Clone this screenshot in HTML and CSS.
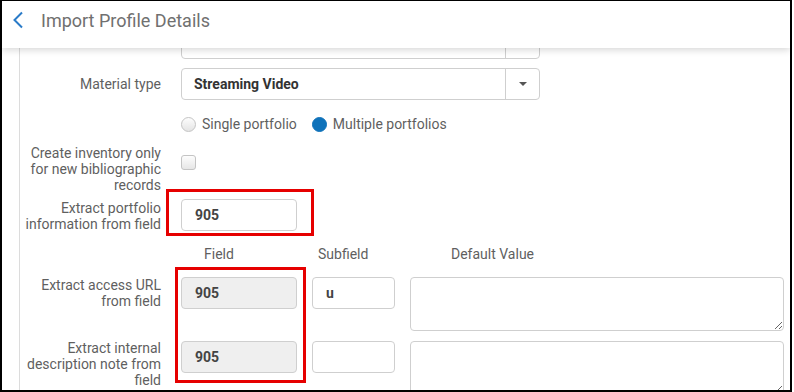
FILE: index.html
```html
<!DOCTYPE html>
<html lang="en">
<head>
    <meta charset="UTF-8">
    <meta name="viewport" content="width=device-width, initial-scale=1.0">
    <title>Import Profile Details</title>
    <link rel="stylesheet" href="styles.css">
</head>
<body>
    <div class="frame">
        <header class="page-header">
            <svg class="back-icon" width="12" height="18" viewBox="0 0 12 18">
                <path d="M10 1.5 L2.5 9 L10 16.5" fill="none" stroke="#2a7bc8" stroke-width="2"/>
            </svg>
            <span class="page-title">Import Profile Details</span>
        </header>

        <div class="content">
            <div class="panel">
                <div class="form-row row-partial">
                    <div class="label"></div>
                    <div class="select-box">
                        <span class="select-value"></span>
                        <span class="select-toggle"></span>
                    </div>
                </div>

                <div class="form-row row-material">
                    <div class="label">Material type</div>
                    <div class="select-box">
                        <span class="select-value">Streaming Video</span>
                        <span class="select-toggle"><span class="caret"></span></span>
                    </div>
                </div>

                <div class="form-row row-radios">
                    <div class="label"></div>
                    <label class="radio"><span class="radio-dot"></span>Single portfolio</label>
                    <label class="radio"><span class="radio-dot checked"></span>Multiple portfolios</label>
                </div>

                <div class="form-row row-checkbox">
                    <div class="label">Create inventory only for new bibliographic records</div>
                    <span class="checkbox"></span>
                </div>

                <div class="form-row row-portfolio">
                    <div class="label">Extract portfolio information from field</div>
                    <div class="highlight-wrap">
                        <div class="text-input field-input">905</div>
                        <span class="highlight highlight-single"></span>
                    </div>
                </div>

                <div class="field-grid">
                    <div class="label"></div>
                    <div class="col-head head-field">Field</div>
                    <div class="col-head head-subfield">Subfield</div>
                    <div class="col-head head-default">Default Value</div>

                    <div class="label">Extract access URL from field</div>
                    <div class="text-input field-input disabled">905</div>
                    <div class="text-input sub-input">u</div>
                    <textarea class="default-input"></textarea>

                    <div class="label last-row">Extract internal description note from field</div>
                    <div class="text-input field-input disabled last-row">905</div>
                    <div class="text-input sub-input last-row"></div>
                    <textarea class="default-input last-row"></textarea>

                    <span class="highlight highlight-column"></span>
                </div>
            </div>
        </div>
    </div>
</body>
</html>
```

FILE: styles.css
```css
body {
    margin: 0;
    padding: 0;
    font-family: Roboto, "Liberation Sans", Arial, sans-serif;
    background-color: white;
    color: #555;
}
.frame {
    width: 792px;
    height: 392px;
    box-sizing: border-box;
    border: 2px solid black;
    border-top-width: 1px;
    overflow: hidden;
    display: flex;
    flex-direction: column;
}
.page-header {
    position: relative;
    z-index: 2;
    height: 47px;
    flex-shrink: 0;
    box-sizing: border-box;
    padding: 10px 0 0 10px;
    display: flex;
    align-items: flex-start;
    background-color: white;
    box-shadow: 0 2px 7px rgba(0, 0, 0, 0.16);
}
.back-icon {
    display: block;
}
.page-title {
    margin-left: 17px;
    font-size: 18px;
    line-height: 21px;
    margin-top: -1px;
    color: #707070;
}
.content {
    flex: 1;
    overflow: hidden;
}
.panel {
    margin-left: 17px;
    border-left: 1px solid #dcdcdc;
    height: 100%;
    margin-top: -21px;
    padding-bottom: 40px;
}
.form-row {
    display: flex;
    align-items: flex-start;
}
.label {
    width: 141px;
    margin-right: 20px;
    flex-shrink: 0;
    text-align: right;
    font-size: 14px;
    line-height: 16px;
    color: #5f5f5f;
}
.row-partial {
    margin-bottom: 9px;
}
.row-material {
    align-items: center;
    margin-bottom: 12px;
}
.select-box {
    width: 359px;
    height: 32px;
    box-sizing: border-box;
    border: 1px solid #cfcfcf;
    border-radius: 4px;
    display: flex;
    background-color: white;
}
.select-value {
    flex: 1;
    padding-left: 12px;
    font-size: 14px;
    font-weight: bold;
    line-height: 30px;
    color: #333;
}
.select-toggle {
    width: 33px;
    border-left: 1px solid #cfcfcf;
    display: flex;
    align-items: center;
    justify-content: center;
}
.caret {
    width: 0;
    height: 0;
    border-left: 4px solid transparent;
    border-right: 4px solid transparent;
    border-top: 4px solid #555;
}
.row-radios {
    height: 24px;
    align-items: center;
    margin-bottom: 9px;
}
.radio {
    display: flex;
    align-items: center;
    font-size: 14px;
    color: #5f5f5f;
    margin-right: 15px;
}
.radio-dot {
    width: 15px;
    height: 15px;
    box-sizing: border-box;
    border-radius: 50%;
    border: 1px solid #c4c4c4;
    background: linear-gradient(#fdfdfd, #e4e4e4);
    margin-right: 6px;
}
.radio-dot.checked {
    border-color: #0f72ba;
    background: #0f72ba;
}
.row-checkbox {
    margin-bottom: 6px;
}
.checkbox {
    width: 15px;
    height: 15px;
    margin-top: 10px;
    box-sizing: border-box;
    border: 1px solid #c4c4c4;
    border-radius: 3px;
    background: linear-gradient(#fdfdfd, #e6e6e6);
}
.row-portfolio {
    margin-bottom: 14px;
}
.row-portfolio .label {
    margin-top: 1px;
}
.highlight-wrap {
    position: relative;
}
.text-input {
    height: 32px;
    box-sizing: border-box;
    border: 1px solid #cfcfcf;
    border-radius: 4px;
    background-color: white;
    padding-left: 13px;
    font-size: 14px;
    font-weight: bold;
    line-height: 30px;
    color: #444;
}
.field-input {
    width: 116px;
}
.field-input.disabled {
    background-color: #efefef;
}
.sub-input {
    width: 83px;
}
.highlight {
    position: absolute;
    box-sizing: border-box;
    border: 3px solid #e60000;
}
.highlight-single {
    left: -15px;
    top: -10px;
    width: 148px;
    height: 47px;
}
.field-grid {
    position: relative;
    display: grid;
    grid-template-columns: 146px 116px 83px 374px;
    grid-template-rows: 21px 54px auto;
    column-gap: 15px;
    row-gap: 10px;
    align-items: start;
}
.field-grid .label {
    width: 141px;
    margin-right: 0;
    padding-right: 5px;
}
.field-grid .label.last-row {
    margin-top: -1px;
}
.col-head {
    font-size: 14px;
    line-height: 16px;
    color: #5f5f5f;
}
.head-field {
    padding-left: 23px;
}
.head-subfield {
    padding-left: 6px;
}
.head-default {
    padding-left: 41px;
}
.default-input {
    display: block;
    width: 374px;
    height: 54px;
    box-sizing: border-box;
    margin: 0;
    border: 1px solid #cfcfcf;
    border-radius: 4px;
    font-family: inherit;
    resize: vertical;
}
.highlight-column {
    left: 155px;
    top: 21px;
    width: 131px;
    height: 116px;
}
```
